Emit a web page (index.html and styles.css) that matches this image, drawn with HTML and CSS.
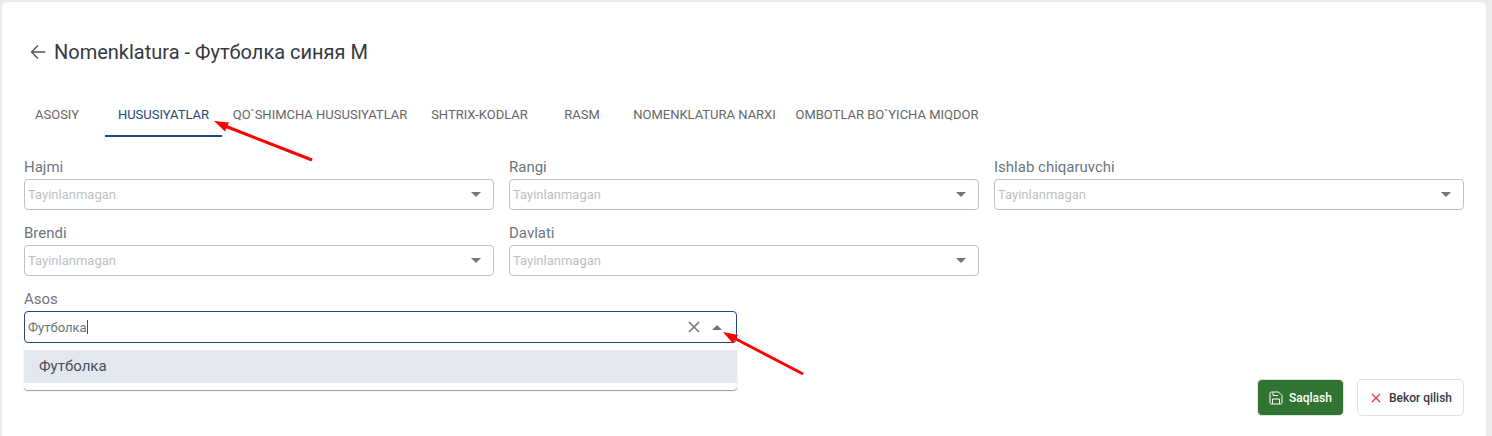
FILE: index.html
```html
<!DOCTYPE html>
<html lang="uz">
<head>
    <meta charset="UTF-8">
    <meta name="viewport" content="width=device-width, initial-scale=1.0">
    <title>Nomenklatura - Футболка синяя M</title>
    <link rel="stylesheet" href="styles.css">
</head>
<body>
    <main class="card">
        <header class="page-header">
            <button class="back" type="button" aria-label="Orqaga">
                <svg width="16" height="16" viewBox="0 0 16 16"><path d="M15.500 8H1.500M8 1.500L1.500 8L8 14.500"/></svg>
            </button>
            <h1>Nomenklatura - Футболка синяя M</h1>
        </header>

        <nav class="tabs" role="tablist">
            <button type="button" role="tab">ASOSIY</button>
            <button type="button" role="tab" class="active" aria-selected="true">
                HUSUSIYATLAR
                <svg class="pointer pointer-tab" width="100" height="42" viewBox="0 0 100 42">
                    <path class="line" d="M11 5L98 39"/>
                    <path class="head" d="M0 0L15 1.500L11 10.500Z"/>
                </svg>
            </button>
            <button type="button" role="tab">QO`SHIMCHA HUSUSIYATLAR</button>
            <button type="button" role="tab">SHTRIX-KODLAR</button>
            <button type="button" role="tab">RASM</button>
            <button type="button" role="tab">NOMENKLATURA NARXI</button>
            <button type="button" role="tab">OMBOTLAR BO`YICHA MIQDOR</button>
        </nav>

        <form class="form">
            <div class="fields">
                <div class="field">
                    <label for="size">Hajmi</label>
                    <div class="control">
                        <select id="size"><option>Tayinlanmagan</option></select>
                        <svg class="caret" width="10" height="5" viewBox="0 0 10 5"><path d="M0 0H10L5 5Z"/></svg>
                    </div>
                </div>
                <div class="field">
                    <label for="color">Rangi</label>
                    <div class="control">
                        <select id="color"><option>Tayinlanmagan</option></select>
                        <svg class="caret" width="10" height="5" viewBox="0 0 10 5"><path d="M0 0H10L5 5Z"/></svg>
                    </div>
                </div>
                <div class="field">
                    <label for="producer">Ishlab chiqaruvchi</label>
                    <div class="control">
                        <select id="producer"><option>Tayinlanmagan</option></select>
                        <svg class="caret" width="10" height="5" viewBox="0 0 10 5"><path d="M0 0H10L5 5Z"/></svg>
                    </div>
                </div>
                <div class="field">
                    <label for="brand">Brendi</label>
                    <div class="control">
                        <select id="brand"><option>Tayinlanmagan</option></select>
                        <svg class="caret" width="10" height="5" viewBox="0 0 10 5"><path d="M0 0H10L5 5Z"/></svg>
                    </div>
                </div>
                <div class="field">
                    <label for="state">Davlati</label>
                    <div class="control">
                        <select id="state"><option>Tayinlanmagan</option></select>
                        <svg class="caret" width="10" height="5" viewBox="0 0 10 5"><path d="M0 0H10L5 5Z"/></svg>
                    </div>
                </div>
            </div>

            <div class="base-row">
                <div class="field">
                    <label for="base">Asos</label>
                    <div class="combo">
                        <input id="base" type="text" role="combobox" aria-expanded="true" aria-controls="base-list" value="Футболка" autocomplete="off" spellcheck="false">
                        <span class="text-cursor"></span>
                        <button type="button" class="clear" aria-label="Tozalash">
                            <svg width="12" height="12" viewBox="0 0 12 12"><path d="M1 1L11 11M11 1L1 11"/></svg>
                        </button>
                        <button type="button" class="toggle" aria-label="Yopish">
                            <svg width="10" height="5" viewBox="0 0 10 5"><path d="M0 5H10L5 0Z"/></svg>
                        </button>
                        <ul class="options" id="base-list" role="listbox">
                            <li role="option" aria-selected="true">Футболка</li>
                        </ul>
                        <svg class="pointer pointer-combo" width="84" height="46" viewBox="0 0 84 46">
                            <path class="line" d="M11 6L80 42"/>
                            <path class="head" d="M0 0L15 3L10 11.500Z"/>
                        </svg>
                    </div>
                </div>
            </div>

            <div class="actions">
                <button type="submit" class="btn save">
                    <svg width="14" height="14" viewBox="0 0 14 14"><path d="M2.500 1H9.500L13 4.500V11.500Q13 13 11.500 13H2.500Q1 13 1 11.500V2.500Q1 1 2.500 1ZM4 1.500V4.500H9M3.500 13V8H10.500V13"/></svg>
                    Saqlash
                </button>
                <button type="button" class="btn cancel">
                    <svg width="10" height="10" viewBox="0 0 10 10"><path d="M1 1L9 9M9 1L1 9"/></svg>
                    Bekor qilish
                </button>
            </div>
        </form>
    </main>
</body>
</html>
```
FILE: styles.css
```css
* {
    box-sizing: border-box;
}
body {
    margin: 0;
    padding: 2px 6px 0 2px;
    background: #ebebeb;
    font-family: Roboto, "Noto Sans", sans-serif;
    color: #6c757d;
}
button, input, select {
    font-family: inherit;
    color: inherit;
}
button {
    padding: 0;
    border: none;
    background: none;
    cursor: pointer;
}
svg {
    display: block;
    flex: none;
}
.card {
    min-height: calc(100vh - 2px);
    padding: 36px 22px 20px;
    background: #fff;
    border-radius: 5px 5px 0 0;
}
.page-header {
    display: flex;
    align-items: center;
    gap: 8px;
    padding-left: 6px;
}
.page-header h1 {
    margin: 0;
    font-size: 20px;
    line-height: 28px;
    font-weight: 400;
    color: #343a40;
}
.back svg {
    fill: none;
    stroke: #555;
    stroke-width: 1.4;
}
.tabs {
    display: grid;
    grid-template-columns: 96px 117px 196px 123px 82px 163px 202px;
    height: 44px;
    margin: 27px 0 0 -15px;
}
.tabs button {
    position: relative;
    font-size: 13px;
    white-space: nowrap;
    color: #666;
    border-bottom: 2px solid transparent;
}
.tabs .active {
    color: #234781;
    border-bottom-color: #234781;
}
.form {
    margin-top: 20px;
}
.fields {
    display: grid;
    grid-template-columns: repeat(3, 1fr);
    gap: 13px 15px;
}
.field label {
    display: block;
    height: 22px;
    font-size: 15px;
    line-height: 20px;
}
.control {
    position: relative;
}
.control select {
    display: block;
    width: 100%;
    height: 31px;
    padding: 0 30px 0 3px;
    appearance: none;
    background: #fff;
    border: 1px solid #c0c0c0;
    border-radius: 4px;
    font-size: 13px;
    color: #bdbfc4;
}
.caret {
    position: absolute;
    top: 13px;
    right: 13px;
    fill: #757575;
    pointer-events: none;
}
.base-row {
    display: grid;
    grid-template-columns: repeat(2, 1fr);
    gap: 15px;
    margin-top: 13px;
}
.combo {
    position: relative;
    display: flex;
    align-items: center;
    height: 32px;
    padding-right: 14px;
    border: 1px solid #234781;
    border-radius: 4px;
}
.combo input {
    flex: 1;
    min-width: 0;
    height: 100%;
    padding: 0 3px;
    border: none;
    outline: none;
    background: none;
    font-size: 13px;
    caret-color: transparent;
}
.text-cursor {
    position: absolute;
    top: 8px;
    left: 62px;
    width: 1px;
    height: 14px;
    background: #495057;
}
.clear {
    margin-right: 12px;
}
.clear svg {
    fill: none;
    stroke: #757575;
    stroke-width: 1.6;
}
.toggle svg {
    fill: #757575;
}
.options {
    position: absolute;
    top: calc(100% + 1px);
    left: -1px;
    right: -1px;
    z-index: 1;
    margin: 0;
    padding: 7px 0;
    list-style: none;
    background: #fff;
    border-radius: 0 0 4px 4px;
    box-shadow: 0 1px 1px #999;
}
.options li {
    padding: 0 15px;
    font-size: 15px;
    line-height: 33px;
    color: #495057;
    background: #e3e7ef;
}
.pointer {
    position: absolute;
    z-index: 2;
    pointer-events: none;
}
.pointer .line {
    fill: none;
    stroke: #f00;
    stroke-width: 3;
}
.pointer .head {
    fill: #f00;
}
.pointer-tab {
    top: 28px;
    left: 109px;
}
.pointer-combo {
    top: 20px;
    left: calc(100% - 13px);
}
.actions {
    display: flex;
    justify-content: flex-end;
    gap: 13px;
    margin-top: 36px;
}
.btn {
    display: flex;
    align-items: center;
    height: 37px;
    padding: 0 11px;
    border: 1px solid #dee2e6;
    border-radius: 5px;
    font-size: 12px;
    font-weight: 500;
    color: #343a40;
}
.btn svg {
    fill: none;
}
.save {
    gap: 6px;
    background: #317331;
    color: #fff;
}
.save svg {
    stroke: #fff;
}
.cancel {
    gap: 8px;
    padding-left: 13px;
}
.cancel svg {
    stroke: #e53935;
    stroke-width: 1.3;
}
```
